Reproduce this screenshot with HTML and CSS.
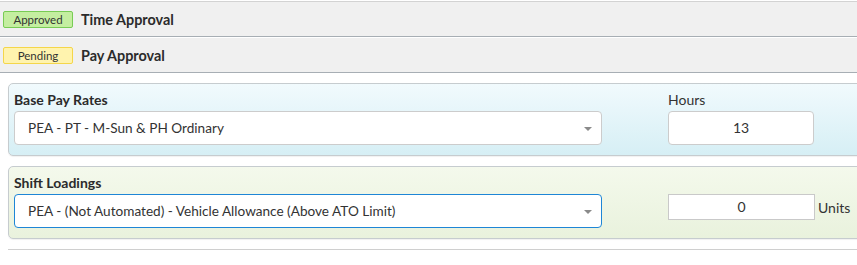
FILE: index.html
```html
<!DOCTYPE html>
<html>
<head>
<meta charset="utf-8">
<link rel="stylesheet" href="styles.css">
</head>
<body>
<div class="page">
  <div class="approvals">
    <div class="approval-row">
      <span class="badge badge-approved">Approved</span>
      <span class="approval-title">Time Approval</span>
    </div>
    <div class="approval-row">
      <span class="badge badge-pending">Pending</span>
      <span class="approval-title">Pay Approval</span>
    </div>
  </div>

  <div class="panel panel-blue">
    <div class="col col-main">
      <div class="field-label bold">Base Pay Rates</div>
      <div class="select">
        <span class="select-text">PEA - PT - M-Sun &amp; PH Ordinary</span>
        <span class="caret"></span>
      </div>
    </div>
    <div class="col col-side">
      <div class="field-label">Hours</div>
      <div class="num-input rounded">13</div>
    </div>
  </div>

  <div class="panel panel-green">
    <div class="col col-main">
      <div class="field-label bold">Shift Loadings</div>
      <div class="select focused">
        <span class="select-text">PEA - (Not Automated) - Vehicle Allowance (Above ATO Limit)</span>
        <span class="caret"></span>
      </div>
    </div>
    <div class="col col-side">
      <div class="field-label"></div>
      <div class="unit-row">
        <div class="num-input square">0</div>
        <span class="unit-label">Units</span>
      </div>
    </div>
  </div>

  <div class="divider"></div>
</div>
</body>
</html>
```

FILE: styles.css
```css
html, body {
  margin: 0;
  padding: 0;
  background: #ffffff;
  overflow: hidden;
}

body {
  font-family: Lato, "Open Sans", sans-serif;
  color: #333333;
  font-size: 13px;
}

.page {
  width: 857px;
  padding-top: 1px;
}

.approvals {
  border-top: 1px solid #d3d3d3;
  display: flex;
  flex-direction: column;
  gap: 1px;
}

.approval-row {
  height: 34px;
  background: #f0f0f0;
  border-bottom: 1px solid #a7aeb4;
  display: flex;
  align-items: center;
  padding-left: 3px;
}

.badge {
  box-sizing: border-box;
  width: 70px;
  height: 17px;
  border: 1px solid;
  border-radius: 2px;
  font-size: 11.5px;
  line-height: 15px;
  text-align: center;
  color: #333;
  margin-top: 1px;
}

.badge-approved {
  background: #c4eea0;
  border-color: #78cc55;
}

.badge-pending {
  background: #fff3ae;
  border-color: #f4d64a;
}

.approval-title {
  margin-left: 8px;
  font-weight: bold;
  font-size: 14.4px;
  color: #2b2b2b;
}

.panel {
  box-sizing: border-box;
  width: 880px;
  margin-left: 8px;
  height: 73px;
  border: 1px solid #c6cccf;
  border-radius: 5px;
  padding: 6px 5px 0 5px;
  display: flex;
  gap: 66px;
  box-shadow: 0 1px 1px rgba(0,0,0,0.06);
}

.panel-blue {
  margin-top: 10px;
  background: linear-gradient(to bottom, #f1fafd, #d6eff5);
}

.panel-green {
  margin-top: 10px;
  background: linear-gradient(to bottom, #f4f9ec, #e9f2dd);
}

.col {
  display: flex;
  flex-direction: column;
}

.col-main {
  width: 588px;
}

.col-side {
  width: 146px;
}

.field-label {
  height: 20px;
  line-height: 20px;
  margin-bottom: 1px;
  font-size: 14px;
  color: #333;
}

.field-label.bold {
  font-weight: bold;
  color: #2b2b2b;
}

.select {
  box-sizing: border-box;
  height: 34px;
  background: #ffffff;
  border: 1px solid #cccccc;
  border-radius: 4px;
  display: flex;
  align-items: center;
  justify-content: space-between;
  padding: 0 9px 0 13px;
}

.select.focused {
  border-color: #1e86d6;
}

.select-text {
  font-size: 13.6px;
  color: #333;
}

.caret {
  width: 0;
  height: 0;
  border-left: 4px solid transparent;
  border-right: 4px solid transparent;
  border-top: 4px solid #8a8a8a;
  margin-top: 1px;
}

.num-input {
  box-sizing: border-box;
  background: #fff;
  border: 1px solid #cccccc;
  text-align: center;
  font-size: 14px;
  color: #333;
  flex-shrink: 0;
}

.num-input.rounded {
  height: 34px;
  line-height: 32px;
  border-radius: 4px;
  width: 146px;
}

.num-input.square {
  height: 26px;
  line-height: 24px;
  width: 147px;
  border-color: #c9c9c9;
}

.unit-row {
  display: flex;
  align-items: center;
  gap: 3px;
  width: 200px;
}

.unit-label {
  font-size: 14px;
  color: #333;
  flex-shrink: 0;
}

.divider {
  margin-left: 8px;
  margin-top: 10px;
  height: 1px;
  background: #cfcfcf;
}
```
